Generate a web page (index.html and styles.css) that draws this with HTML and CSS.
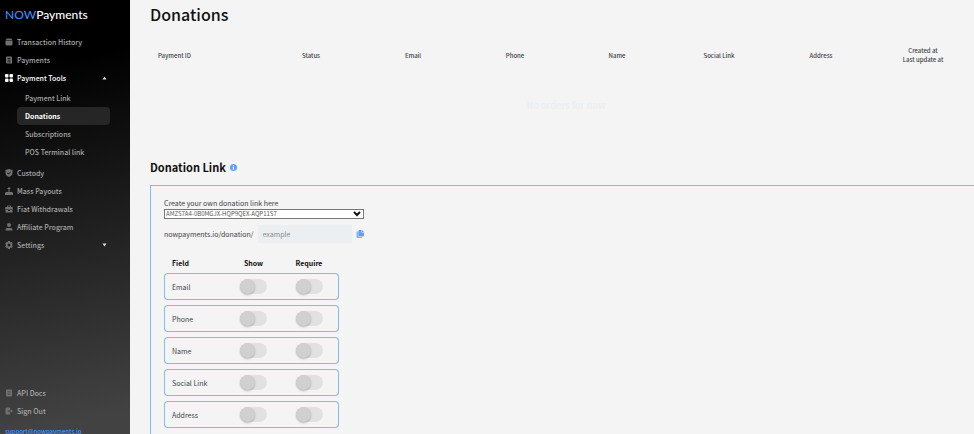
FILE: index.html
```html
<!DOCTYPE html>
<html lang="en">
<head>
<meta charset="utf-8">
<title>Donations</title>
<link rel="stylesheet" href="styles.css">
</head>
<body>
<div class="shell">
  <aside class="sidebar">
    <a class="logo" href="#"><span class="logo-now">NOW</span>Payments</a>
    <nav class="nav">
      <a class="nav-item" href="#"><svg class="icon" viewBox="0 0 16 16"><path d="M4 1h8l3 3H1zM1 5h14v7a3 3 0 0 1-3 3H4a3 3 0 0 1-3-3z"/></svg>Transaction History</a>
      <a class="nav-item" href="#"><svg class="icon" viewBox="0 0 16 16"><path fill-rule="evenodd" d="M4 1h8a2 2 0 0 1 2 2v12H4a2 2 0 0 1-2-2V3a2 2 0 0 1 2-2zm1 3v1.500h6V4zm0 3.500V9h6V7.500zM5 11v1.500h6V11z"/></svg>Payments</a>
      <a class="nav-item nav-open" href="#"><svg class="icon" viewBox="0 0 16 16"><rect x="0" y="0" width="7" height="7" rx="2"/><rect x="9" y="0" width="7" height="7" rx="2"/><rect x="0" y="9" width="7" height="7" rx="2"/><rect x="9" y="9" width="7" height="7" rx="2"/></svg>Payment Tools<svg class="caret" viewBox="0 0 8 8"><path d="M4 1l4 6H0z"/></svg></a>
      <div class="subnav">
        <a class="sub-item" href="#">Payment Link</a>
        <a class="sub-item sub-active" href="#">Donations</a>
        <a class="sub-item" href="#">Subscriptions</a>
        <a class="sub-item" href="#">POS Terminal link</a>
      </div>
      <a class="nav-item" href="#"><svg class="icon" viewBox="0 0 16 16"><path fill-rule="evenodd" d="M8 0l7 2v6c0 4-3 6.500-7 8-4-1.500-7-4-7-8V2zM4 8l3 3 5-5-1-1-4 4-2-2z"/></svg>Custody</a>
      <a class="nav-item" href="#"><svg class="icon" viewBox="0 0 16 16"><path d="M8 0l4 4H9v6h5l2 2v4H0v-4l2-2h5V4H4z"/></svg>Mass Payouts</a>
      <a class="nav-item" href="#"><svg class="icon" viewBox="0 0 16 16"><path fill-rule="evenodd" d="M5 1h6l1 3h3l1 5H0l1-5h3zm1 1.500L5.500 4h5L10 2.500zM1 10h5v2h4v-2h5v5H1z"/></svg>Fiat Withdrawals</a>
      <a class="nav-item" href="#"><svg class="icon" viewBox="0 0 16 16"><circle cx="8" cy="4" r="4"/><path d="M1 15c0-4 2-5 4-5h6c2 0 4 1 4 5z"/></svg>Affiliate Program</a>
      <a class="nav-item" href="#"><svg class="icon" viewBox="0 0 16 16"><path fill-rule="evenodd" d="M6 0h4l.5 2.500L13 1.800l2.500 3.400L14 8l1.500 2.800-2.500 3.400-2.500-.7L10 16H6l-.5-2.500-2.500.7-2.500-3.400L2 8 .5 5.200 3 1.800l2.500.7zM8 5a3 3 0 1 0 0 6 3 3 0 0 0 0-6z"/></svg>Settings<svg class="caret" viewBox="0 0 8 8"><path d="M0 1h8L4 7z"/></svg></a>
    </nav>
    <div class="nav-foot">
      <a class="nav-item" href="#"><svg class="icon" viewBox="0 0 16 16"><path fill-rule="evenodd" d="M4 1h8a2 2 0 0 1 2 2v12H4a2 2 0 0 1-2-2V3a2 2 0 0 1 2-2zm1 3v1h6V4zm0 3.500v1h6v-1zM5 11v1h6v-1z"/></svg>API Docs</a>
      <a class="nav-item" href="#"><svg class="icon" viewBox="0 0 16 16"><path d="M3 1h7v5H6v4h4v5H3a2 2 0 0 1-2-2V3a2 2 0 0 1 2-2zM12 5l4 3-4 3V9H7V7h5z"/></svg>Sign Out</a>
      <a class="support" href="#">support@nowpayments.io</a>
    </div>
  </aside>
  <main class="main">
    <h1 class="title">Donations</h1>
    <table class="orders">
      <thead>
        <tr><th class="col-id">Payment ID</th><th>Status</th><th>Email</th><th>Phone</th><th>Name</th><th>Social Link</th><th>Address</th><th>Created at<br>Last update at</th></tr>
      </thead>
    </table>
    <p class="empty">No orders for now</p>
    <h2 class="section-title">Donation Link <svg class="info" viewBox="0 0 16 16"><circle cx="8" cy="8" r="8"/><path class="info-mark" d="M7 3h2v2H7zM6 6.500h3V11h1v1.500H6V11h1V8H6z"/></svg></h2>
    <section class="panel">
      <label class="text" for="key">Create your own donation link here</label>
      <div class="select-wrap">
        <select class="select" id="key"><option>AMZS7A4-0B0MGJX-HQP9QEX-AQP11S7</option></select>
        <svg class="chevron" viewBox="0 0 8 6"><path d="M1 1l3 3 3-3"/></svg>
      </div>
      <div class="link-row">
        <label class="text" for="slug">nowpayments.io/donation/</label>
        <input class="slug" id="slug" type="text" placeholder="example">
        <button class="copy" type="button" aria-label="Copy"><svg viewBox="0 0 16 16"><path class="copy-back" d="M3 3h2v9a2 2 0 0 0 2 2h5v2H3a2 2 0 0 1-2-2V5a2 2 0 0 1 2-2z"/><path d="M7 0h4v5h5v6a2 2 0 0 1-2 2H7a2 2 0 0 1-2-2V2a2 2 0 0 1 2-2zM12 0l4 4h-4z"/></svg></button>
      </div>
      <table class="fields">
        <thead><tr><th class="field-name">Field</th><th class="field-show">Show</th><th>Require</th></tr></thead>
        <tbody>
          <tr><td>Email</td><td><input class="toggle" type="checkbox" aria-label="Show email"></td><td><input class="toggle" type="checkbox" aria-label="Require email"></td></tr>
          <tr><td>Phone</td><td><input class="toggle" type="checkbox" aria-label="Show phone"></td><td><input class="toggle" type="checkbox" aria-label="Require phone"></td></tr>
          <tr><td>Name</td><td><input class="toggle" type="checkbox" aria-label="Show name"></td><td><input class="toggle" type="checkbox" aria-label="Require name"></td></tr>
          <tr><td>Social Link</td><td><input class="toggle" type="checkbox" aria-label="Show social link"></td><td><input class="toggle" type="checkbox" aria-label="Require social link"></td></tr>
          <tr><td>Address</td><td><input class="toggle" type="checkbox" aria-label="Show address"></td><td><input class="toggle" type="checkbox" aria-label="Require address"></td></tr>
        </tbody>
      </table>
    </section>
  </main>
</div>
</body>
</html>
```
FILE: styles.css
```css
* { box-sizing: border-box; }
body {
  margin: 0;
  background: #f4f4f4;
  color: #3d4145;
  font-family: "Noto Sans CJK JP", "Open Sans", sans-serif;
  font-size: 7px;
  line-height: 12px;
}
a { color: inherit; text-decoration: none; }
.shell { display: flex; height: 100vh; overflow: hidden; }

.sidebar {
  flex: 0 0 130px;
  padding: 5px 0 0 5px;
  background: linear-gradient(170deg, #000 15%, #424242 95%);
  color: #a8a8a8;
  font-weight: 500;
}
.logo {
  display: block;
  height: 28px;
  color: #fff;
  font-family: Lato, sans-serif;
  font-size: 12px;
  line-height: 20px;
}
.logo-now { color: #3f8df5; }
.nav-item { display: flex; align-items: center; gap: 4px; height: 18px; padding-right: 23px; }
.nav-open { color: #fff; }
.icon { width: 8px; height: 8px; fill: #707070; }
.nav-open .icon { fill: #fff; }
.caret { width: 5px; height: 4px; margin-left: auto; fill: #ddd; }
.subnav { margin: 2px 20px 3px 12px; }
.sub-item { display: flex; align-items: center; height: 18px; padding-left: 8px; border-radius: 4px; }
.sub-active { background: #262626; color: #fff; font-weight: 700; }
.nav-foot { margin-top: 130px; }
.support { display: block; padding-top: 6px; color: #4b97ff; font-size: 6px; text-decoration: underline; }

.main { flex: 1; min-width: 0; padding-left: 20px; }
.title { margin: 0; color: #111; font-size: 16px; font-weight: 500; line-height: 28px; }
.orders { width: 100%; margin-top: 18px; table-layout: fixed; border-collapse: collapse; }
.orders th { padding: 0; font-size: 6px; font-weight: 500; line-height: 9px; }
.orders .col-id { width: 110px; padding-left: 8px; text-align: left; }
.empty { margin: 36px 0 0 8px; color: #eceff1; font-size: 9px; font-weight: 700; text-align: center; }
.section-title {
  display: flex;
  align-items: center;
  gap: 4px;
  margin: 45px 0 8px;
  color: #111;
  font-size: 11px;
  line-height: 20px;
}
.info { width: 7px; height: 7px; fill: #5aa3f7; }
.info-mark { fill: #fff; }

.panel { padding: 11px 0 20px 13px; border: 1px solid #82b8ff; border-right: 0; }
.text { display: block; line-height: 12px; }
.select-wrap { position: relative; width: 200px; }
.select {
  display: block;
  width: 100%;
  height: 10px;
  padding: 0 1px;
  border: 1px solid #777;
  border-radius: 0;
  appearance: none;
  background: #fff;
  color: #555;
  font-family: inherit;
  font-size: 6px;
  line-height: 8px;
}
.chevron { position: absolute; top: 2px; right: 3px; width: 8px; height: 6px; fill: none; stroke: #111; stroke-width: 2; }
.link-row { display: flex; align-items: center; gap: 4px; margin-top: 6px; }
.slug {
  width: 94px;
  height: 18px;
  padding: 0 5px;
  border: 0;
  background: #eceff2;
  color: #3d4145;
  font-family: inherit;
  font-size: 7px;
}
.slug::placeholder { color: #888; }
.copy { width: 8px; height: 8px; padding: 0; border: 0; background: none; }
.copy svg { display: block; fill: #5aa3f7; }
.copy .copy-back { fill: #7db6fa; }

.fields { width: 175px; margin-top: 10px; table-layout: fixed; border-collapse: separate; border-spacing: 0 5px; }
.fields th { padding: 0; color: #111; font-weight: 700; line-height: 10px; }
.fields .field-name { width: 62px; padding-left: 8px; text-align: left; }
.fields .field-show { width: 55px; }
.fields th:last-child { padding-right: 2px; }
.fields td { height: 27px; padding: 0; border: solid #82b8ff; border-width: 1px 0; text-align: center; }
.fields td:first-child { padding-left: 7px; border-left-width: 1px; border-radius: 4px 0 0 4px; text-align: left; }
.fields td:last-child { padding-right: 1px; border-right-width: 1px; border-radius: 0 4px 4px 0; }
.toggle {
  display: block;
  width: 27px;
  height: 15px;
  margin: 0 auto;
  border-radius: 8px;
  appearance: none;
  background: #e1e1e1;
}
.toggle::before {
  content: "";
  display: block;
  width: 15px;
  height: 15px;
  border-radius: 50%;
  background: #d0d0d0;
  box-shadow: 0 1px 2px rgba(0, 0, 0, .25);
}
```
